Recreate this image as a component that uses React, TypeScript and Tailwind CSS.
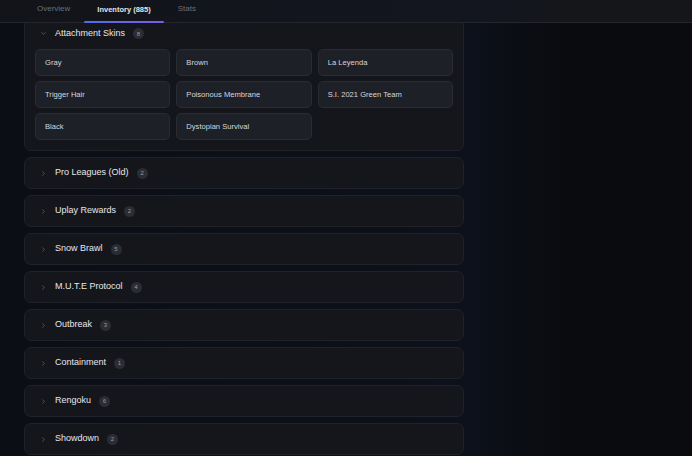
import { ChevronDown, ChevronRight } from 'lucide-react';

const TABS = [
  { label: 'Overview', active: false },
  { label: 'Inventory (885)', active: true },
  { label: 'Stats', active: false },
];

const SKINS = [
  'Gray',
  'Brown',
  'La Leyenda',
  'Trigger Hair',
  'Poisonous Membrane',
  'S.I. 2021 Green Team',
  'Black',
  'Dystopian Survival',
];

const GROUPS: [string, number][] = [
  ['Pro Leagues (Old)', 2],
  ['Uplay Rewards', 2],
  ['Snow Brawl', 5],
  ['M.U.T.E Protocol', 4],
  ['Outbreak', 3],
  ['Containment', 1],
  ['Rengoku', 6],
  ['Showdown', 2],
];

function Badge({ n }: { n: number }) {
  return (
    <span className="flex h-[11px] min-w-[11px] items-center justify-center rounded-full bg-[#2b2d33] px-[3px] text-[6px] leading-none text-[#9a9ca3]">
      {n}
    </span>
  );
}

export default function App() {
  return (
    <div
      className="flex h-screen flex-col overflow-hidden bg-[linear-gradient(90deg,#0b0e15_0%,#0c1019_55%,#0d111b_68%,#0b0d13_76%,#0a0b0f_82%,#0a0b0e_100%)]"
      style={{ fontFamily: '"Liberation Sans", Arial, sans-serif' }}
    >
      <div className="flex h-[23px] shrink-0 border-b border-[#24262c] bg-[linear-gradient(90deg,#121419_0%,#131620_70%,#151619_85%)] pl-[23px]">
        {TABS.map((t) => (
          <div
            key={t.label}
            className={`relative flex items-start pt-[3px] ${
              t.active
                ? 'px-[13px] text-[7.5px] font-bold text-[#e4e5e9]'
                : 'px-[14px] text-[8px] text-[#6c6f77]'
            }`}
          >
            <span className={t.active ? 'pt-[0.5px]' : ''}>{t.label}</span>
            {t.active ? (
              <span className="absolute bottom-[-1px] left-0 right-0 h-[2px] rounded-full bg-[linear-gradient(90deg,#4f6ee8,#7b5be6)]" />
            ) : null}
          </div>
        ))}
      </div>

      <div className="flex-1 overflow-hidden">
        <div className="flex w-[440px] flex-col gap-[6px] pl-[24px]">
          <div className="-mt-[7px] w-[440px] rounded-[7px] border border-[#202229] bg-[#14161c] pb-[10px]">
            <div className="flex h-[32px] items-center gap-[8px] px-[15px] pt-[1px]">
              <ChevronDown size={7} strokeWidth={2} className="text-[#74777e]" />
              <span className="text-[9px] text-[#e6e7ea]">Attachment Skins</span>
              <Badge n={8} />
            </div>
            <div className="grid grid-cols-3 gap-x-[6px] gap-y-[5px] px-[10px]">
              {SKINS.map((s) => (
                <div
                  key={s}
                  className="flex h-[27px] items-center rounded-[5px] border border-[#2a2c33] bg-[#1e2027] px-[9px] text-[7.6px] text-[#d6d7db]"
                >
                  {s}
                </div>
              ))}
            </div>
          </div>

          {GROUPS.map(([name, n]) => (
            <div
              key={name}
              className="flex h-[32px] w-[440px] shrink-0 items-center gap-[8px] rounded-[7px] border border-[#202229] bg-[#14161c] px-[15px]"
            >
              <ChevronRight size={7} strokeWidth={2} className="text-[#74777e]" />
              <span className="text-[9px] text-[#e6e7ea]">{name}</span>
              <Badge n={n} />
            </div>
          ))}
        </div>
      </div>
    </div>
  );
}
